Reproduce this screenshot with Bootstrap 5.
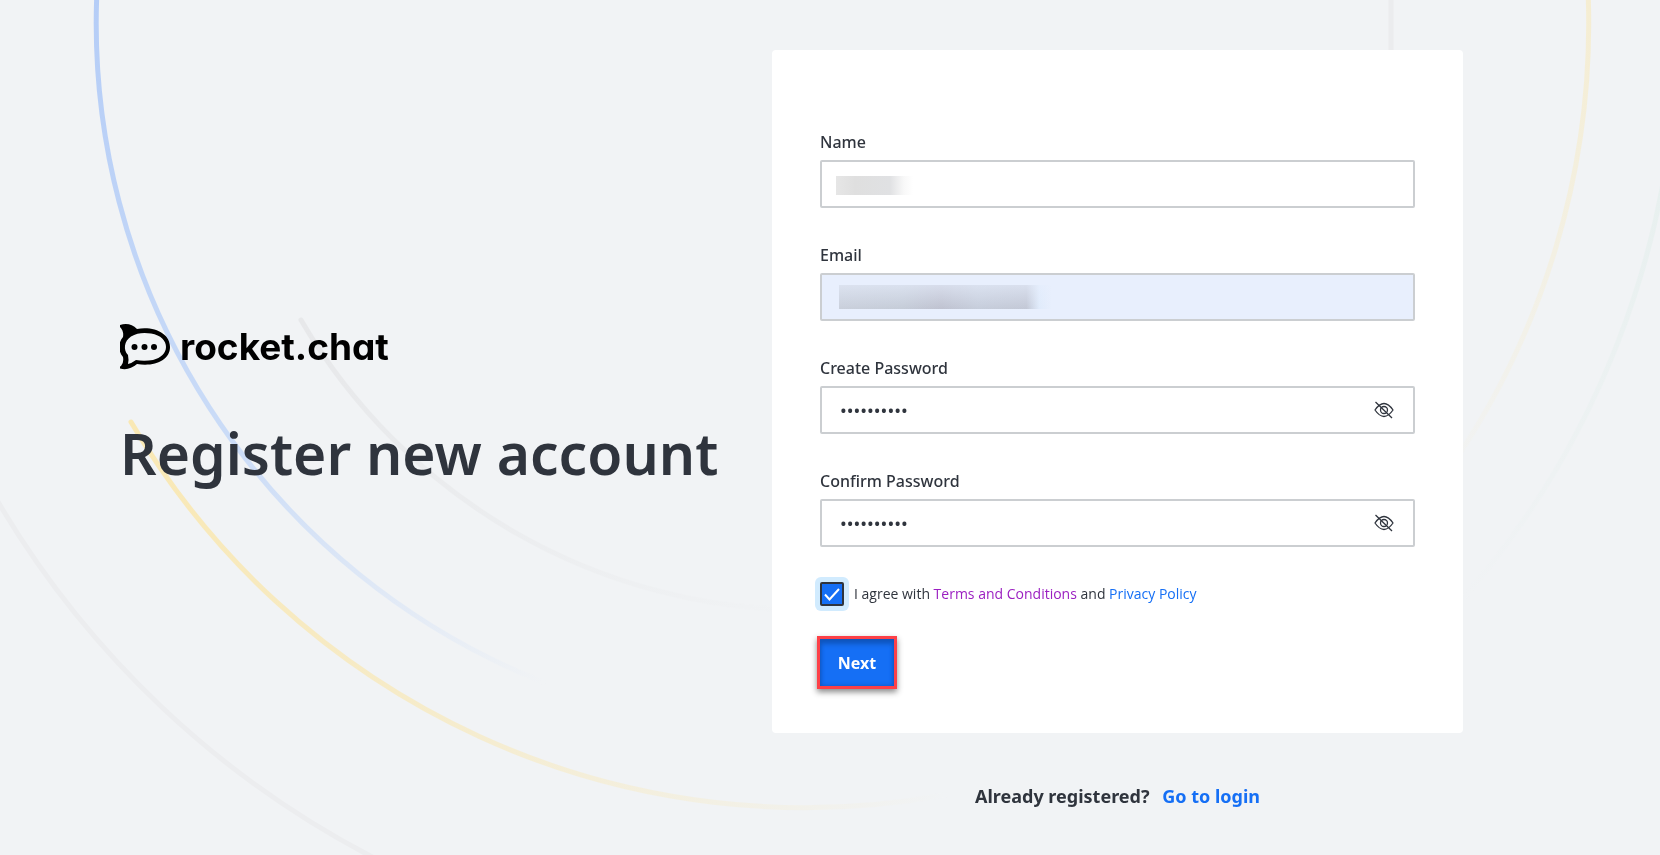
<!DOCTYPE html>
<html lang="en">
<head>
<meta charset="utf-8">
<meta name="viewport" content="width=device-width, initial-scale=1">
<title>Register new account</title>
<link href="https://cdn.jsdelivr.net/npm/bootstrap@5.3.0/dist/css/bootstrap.min.css" rel="stylesheet">
<style>
  body { background: #f1f3f5; color: #2f343d; font-family: "Noto Sans", "Open Sans", sans-serif; }
  a { color: #156ff5; text-decoration: none; }
  .arcs { inset: 0; width: 100%; height: 100%; z-index: -1; }
  .arcs path { fill: none; stroke-width: 5; stroke-linecap: round; }
  .register-page { display: grid; grid-template-columns: 652fr 691fr; padding: 50px 197px 40px 120px; }
  .hero { margin-bottom: 48px; }
  .wordmark { font: 700 37px/48px Inter, sans-serif; font-feature-settings: "cv11"; color: #000; }
  .hero-title { font-size: 57px; line-height: 72px; font-weight: 600; margin: 46px 0 0; white-space: nowrap; }
  .form-panel { border: 0; border-radius: 4px; padding: 80px 48px 44px; }
  .field { margin-bottom: 35px; }
  .field .form-label { font-size: 16px; line-height: 24px; font-weight: 500; margin-bottom: 6px; display: block; }
  .field .form-control { height: 48px; border: 2px solid #cbced1; border-radius: 2px; padding: 0 18px; color: #2f343d; font-size: 18px; }
  .name-input { background: linear-gradient(90deg, #e6e6e6, #dfdfdf 25%, #e0e1e3 70%, #f8f8f8 88%, #fff) 14px 14px / 77px 19px no-repeat #fff; }
  .email-input, .email-input:focus { background: linear-gradient(#e8effd99, #e8effd00) 17px 10px / 213px 24px no-repeat, linear-gradient(90deg, #c9cfdb, #c5ccd8 30%, #bfc2d0 48%, #c6cddb 65%, #c3c8d6 88%, #e0ebfb 94%, #e8effd) 17px 10px / 213px 24px no-repeat #e8effd; }
  .eye-btn { right: 21px; top: 14px; width: 20px; height: 20px; color: #2f343d; }
  .agree-check.form-check-input { width: 24px; height: 24px; margin: 0; border: 2px solid #2f343d; border-radius: 2px; box-shadow: 0 0 0 5px #d1ebfe; }
  .agree-check.form-check-input:checked { background: #156ff5 url("data:image/svg+xml,%3Csvg xmlns='http://www.w3.org/2000/svg' viewBox='0 0 20 20'%3E%3Cpath d='M3 10.5l4.500 5L17 5' fill='none' stroke='%23fff' stroke-width='2'/%3E%3C/svg%3E") center / 20px no-repeat; border-color: #2f343d; }
  .agree-text { font-family: "Open Sans", "Noto Sans", sans-serif; font-size: 14px; line-height: 20px; margin-left: 10px; }
  .visited { color: #9b1fc1; }
  .next-btn { width: 80px; height: 53px; border: 3px solid #fd4047; border-radius: 0; margin: 30px 0 0 -3px; padding: 0; background: #156ff5; color: #fff; font-size: 16px; font-weight: 700; box-shadow: 0 3px 6px #0007, inset 0 5px 5px #0f55bd, inset 0 0 4px #0f55bd; }
  .login-line { font-size: 18px; line-height: 28px; font-weight: 700; margin: 49px 0 0; }
</style>
</head>
<body>
<svg class="arcs position-fixed" viewBox="0 0 1660 855" preserveAspectRatio="xMidYMin slice" aria-hidden="true">
  <defs>
    <linearGradient id="blue" gradientUnits="userSpaceOnUse" x1="96" y1="0" x2="543" y2="682"><stop stop-color="#b5cdf7"/><stop offset=".55" stop-color="#cbdcf7"/><stop offset="1" stop-color="#f1f3f5"/></linearGradient>
    <linearGradient id="yellow" gradientUnits="userSpaceOnUse" x1="130" y1="421" x2="945" y2="795"><stop stop-color="#f9e8b4"/><stop offset=".4" stop-color="#f6ebc8"/><stop offset="1" stop-color="#f1f3f5"/></linearGradient>
    <linearGradient id="yellowRight" gradientUnits="userSpaceOnUse" x1="1588" y1="0" x2="1440" y2="490"><stop stop-color="#f5edd2"/><stop offset="1" stop-color="#f1f3f5"/></linearGradient>
    <linearGradient id="green" gradientUnits="userSpaceOnUse" x1="1660" y1="190" x2="1465" y2="600"><stop stop-color="#e8f0ef"/><stop offset="1" stop-color="#f1f3f5"/></linearGradient>
    <linearGradient id="grey" gradientUnits="userSpaceOnUse" x1="301" y1="320" x2="806" y2="610"><stop stop-color="#e7e8ea"/><stop offset="1" stop-color="#f1f3f5"/></linearGradient>
  </defs>
  <path stroke="url(#blue)" d="M97 -10A709 709 0 0 0 543 682"/>
  <path stroke="url(#yellow)" d="M131 422A782 782 0 0 0 945 795"/>
  <path stroke="url(#yellowRight)" d="M1588 -10A782 782 0 0 1 1440 482"/>
  <path stroke="url(#green)" d="M1677 50A872 872 0 0 1 1465 596"/>
  <path stroke="url(#grey)" d="M301 320A585 585 0 0 0 806 610"/>
  <path stroke="#ebecee" d="M1391 -5V60"/>
  <path stroke="#ecedef" d="M-10 488A938 938 0 0 0 390 866"/>
</svg>

<main class="register-page">
  <section class="hero align-self-center">
    <div class="d-flex align-items-center gap-2">
      <svg width="52" height="46" viewBox="1 0 52 46" aria-hidden="true">
        <path d="M1 1Q11-2 18 5C36 2 51 10 51 23C51 36 36 43 18 40Q10 47 1 44.500Q0 43 2 42Q5 39 4 33C-1 27-1 19 4 13Q5 7 1 3Z"/>
        <path d="M12 12.500C18 8.500 26 8.500 32 9.500C42 11 47 17 47 23C47 29 42 34 34 36C28 37 22 37 17 36Q13 39 9 40Q10 36 9 31C4 26 5 17 12 12.500Z" fill="#f1f3f5"/>
        <circle cx="15.500" cy="23" r="3"/><circle cx="25.500" cy="23" r="3"/><circle cx="35" cy="23" r="3"/>
      </svg>
      <span class="wordmark">rocket.chat</span>
    </div>
    <h1 class="hero-title">Register new account</h1>
  </section>

  <section>
    <form class="card form-panel">
      <div class="field">
        <label class="form-label" for="name">Name</label>
        <input class="form-control name-input" id="name" type="text">
      </div>
      <div class="field">
        <label class="form-label" for="email">Email</label>
        <input class="form-control email-input" id="email" type="email">
      </div>
      <div class="field">
        <label class="form-label" for="password">Create Password</label>
        <div class="position-relative">
          <input class="form-control" id="password" type="password" value="password12">
          <button class="eye-btn btn border-0 p-0 d-flex position-absolute" type="button" aria-label="Show password">
            <svg width="20" height="20" viewBox="0 0 20 20" fill="none" stroke="currentColor" stroke-width="1.300"><path d="M1 10Q10-3 19 10Q10 23 1 10ZM1.500 2L18 18"/><circle cx="10" cy="10" r="3.500"/></svg>
          </button>
        </div>
      </div>
      <div class="field">
        <label class="form-label" for="confirm">Confirm Password</label>
        <div class="position-relative">
          <input class="form-control" id="confirm" type="password" value="password12">
          <button class="eye-btn btn border-0 p-0 d-flex position-absolute" type="button" aria-label="Show password">
            <svg width="20" height="20" viewBox="0 0 20 20" fill="none" stroke="currentColor" stroke-width="1.300"><path d="M1 10Q10-3 19 10Q10 23 1 10ZM1.500 2L18 18"/><circle cx="10" cy="10" r="3.500"/></svg>
          </button>
        </div>
      </div>
      <div class="d-flex align-items-center">
        <input class="form-check-input agree-check flex-shrink-0" id="agree" type="checkbox" checked>
        <label class="agree-text" for="agree">I agree with <a class="visited" href="#terms">Terms and Conditions</a> and <a href="#privacy">Privacy Policy</a></label>
      </div>
      <button class="btn next-btn" type="submit">Next</button>
    </form>
    <p class="login-line text-center">Already registered? <a class="ms-2" href="#login">Go to login</a></p>
  </section>
</main>
<script src="https://cdn.jsdelivr.net/npm/bootstrap@5.3.0/dist/js/bootstrap.bundle.min.js"></script>
</body>
</html>
